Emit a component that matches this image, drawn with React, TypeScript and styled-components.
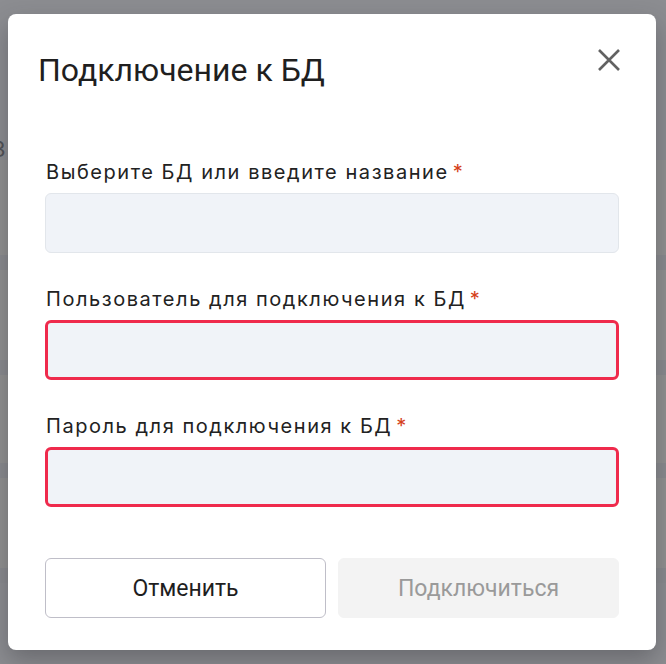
import React from "react";
import styled, { createGlobalStyle } from "styled-components";

const Global = createGlobalStyle`
  html, body { margin: 0; padding: 0; }
  body { width: 666px; height: 664px; overflow: hidden; font-family: Roboto, "Liberation Sans", sans-serif; }
`;

const Page = styled.div`
  position: relative;
  width: 666px;
  height: 664px;
  overflow: hidden;
  background: #8c8d91;
  display: flex;
  flex-direction: column;
`;

const PageHead = styled.div`
  height: 160px;
  display: flex;
  align-items: flex-end;
  color: #505156;
  font-family: Inter, sans-serif;
  font-size: 22px;
  line-height: 22px;
  margin-left: -8px;
  box-sizing: border-box;
`;

const PageRow = styled.div<{ $h: number }>`
  height: ${(p) => p.$h}px;
  background: #919191;
  border-bottom: 15px solid #8a8b8f;
`;

const Overlay = styled.div`
  position: absolute;
  inset: 0;
  display: flex;
  align-items: flex-start;
  justify-content: flex-start;
  padding: 14px 0 0 8px;
`;

const Dialog = styled.div`
  width: 648px;
  height: 636px;
  background: #ffffff;
  border-radius: 8px;
  box-shadow: 0 10px 24px rgba(40, 40, 45, 0.35);
  box-sizing: border-box;
  display: flex;
  flex-direction: column;
`;

const Header = styled.div`
  display: flex;
  align-items: center;
  justify-content: space-between;
  padding: 39px 34px 0 30px;
  height: 34px;
`;

const Title = styled.h2`
  margin: 0;
  font-family: Roboto, sans-serif;
  font-weight: 400;
  font-size: 32px;
  line-height: 34px;
  color: #1f1f1f;
`;

const CloseButton = styled.button`
  width: 26px;
  height: 26px;
  border: none;
  background: none;
  padding: 0;
  margin-top: -20px;
  cursor: pointer;
  display: flex;
  align-items: center;
  justify-content: center;
`;

const Body = styled.div`
  padding: 72px 37px 0 37px;
  display: flex;
  flex-direction: column;
  gap: 33px;
`;

const Field = styled.div`
  display: flex;
  flex-direction: column;
  gap: 9px;
`;

const Label = styled.label`
  font-family: Inter, sans-serif;
  font-size: 20px;
  line-height: 24px;
  letter-spacing: 1.55px;
  color: #222222;
  padding: 1px 0 0 1px;
`;

const Req = styled.span`
  color: #d5401a;
  margin-left: 4px;
`;

const Input = styled.div<{ $error?: boolean }>`
  height: 60px;
  box-sizing: border-box;
  background: #f0f3f8;
  border-radius: 6px;
  border: ${(p) => (p.$error ? "3px solid #ef2a4c" : "1px solid #e2e6eb")};
`;

const Footer = styled.div`
  display: grid;
  grid-template-columns: 1fr 1fr;
  gap: 12px;
  padding: 51px 37px 0 37px;
`;

const Button = styled.button<{ $variant: "outline" | "disabled" }>`
  height: 60px;
  border-radius: 6px;
  font-family: Roboto, sans-serif;
  font-size: 23px;
  cursor: pointer;
  background: ${(p) => (p.$variant === "outline" ? "#ffffff" : "#f3f3f3")};
  color: ${(p) => (p.$variant === "outline" ? "#1e1e1e" : "#9a9a9a")};
  border: ${(p) => (p.$variant === "outline" ? "1px solid #bfbec8" : "1px solid #f3f3f3")};
`;

export default function App() {
  return (
    <>
      <Global />
      <Page>
        <PageHead>З</PageHead>
        <PageRow $h={95} />
        <PageRow $h={90} />
        <PageRow $h={88} />
        <PageRow $h={90} />
        <Overlay>
          <Dialog>
            <Header>
              <Title>Подключение к БД</Title>
              <CloseButton aria-label="Закрыть">
                <svg width="24" height="24" viewBox="0 0 24 24">
                  <path d="M2 2 L22 22 M22 2 L2 22" stroke="#626262" strokeWidth="2.6" fill="none" />
                </svg>
              </CloseButton>
            </Header>
            <Body>
              <Field>
                <Label>
                  Выберите БД или введите название<Req>*</Req>
                </Label>
                <Input />
              </Field>
              <Field>
                <Label>
                  Пользователь для подключения к БД<Req>*</Req>
                </Label>
                <Input $error />
              </Field>
              <Field>
                <Label>
                  Пароль для подключения к БД<Req>*</Req>
                </Label>
                <Input $error />
              </Field>
            </Body>
            <Footer>
              <Button $variant="outline">Отменить</Button>
              <Button $variant="disabled">Подключиться</Button>
            </Footer>
          </Dialog>
        </Overlay>
      </Page>
    </>
  );
}
